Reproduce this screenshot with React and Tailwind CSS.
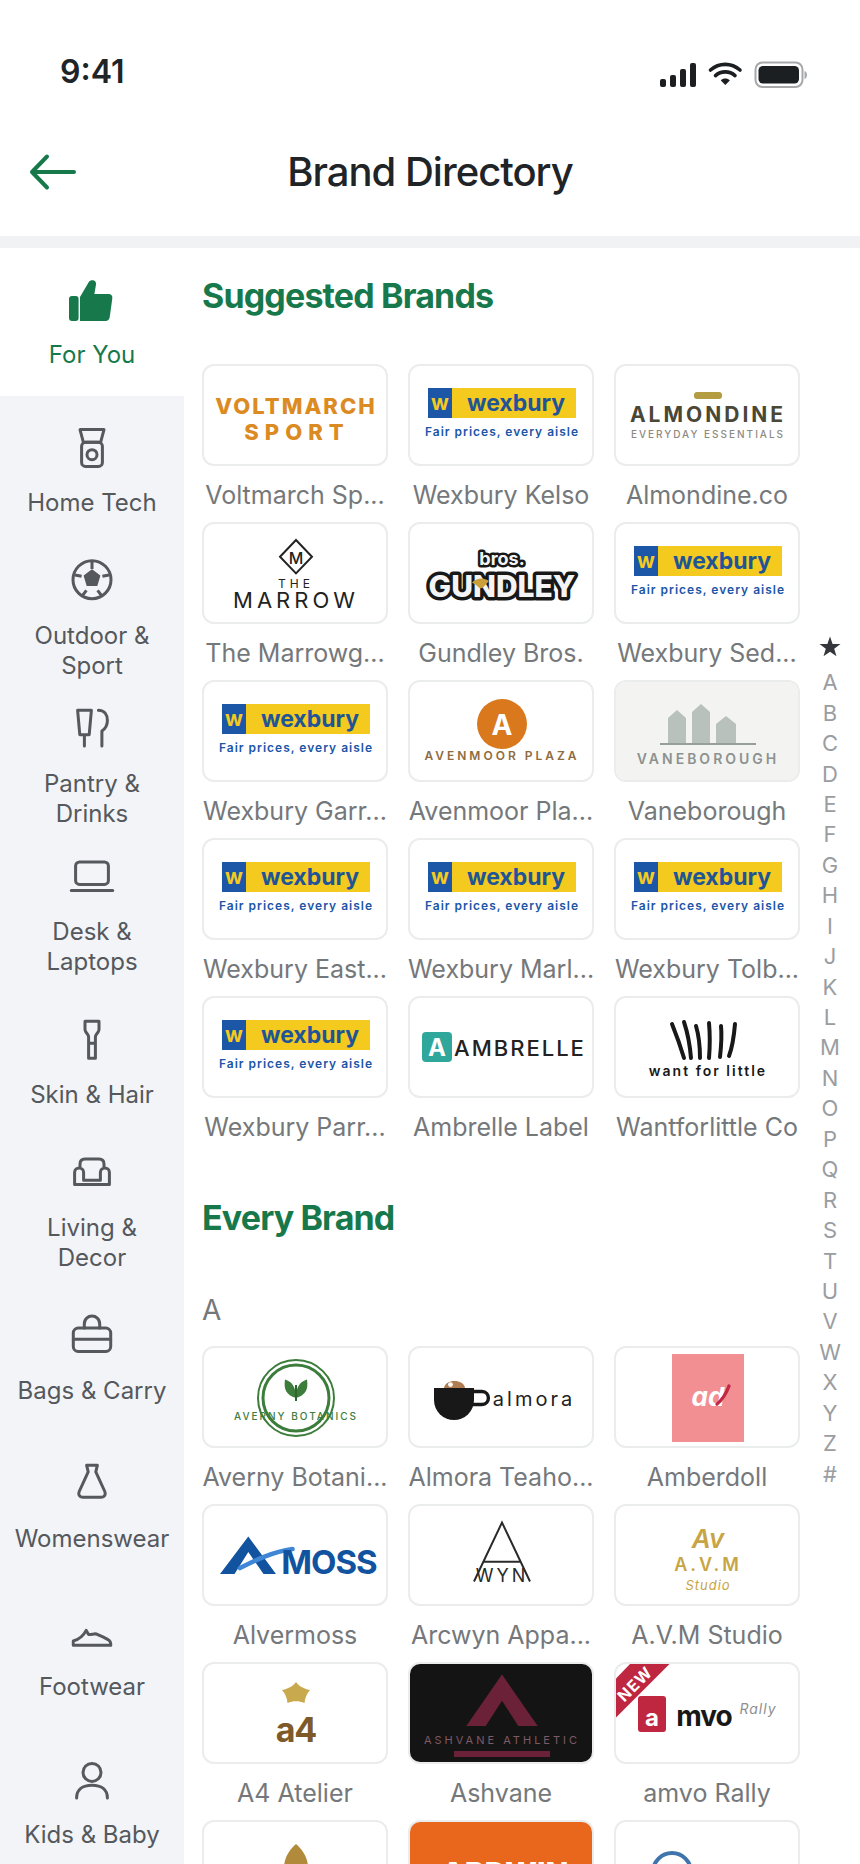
import React, { useState } from "react";

const Icon = ({ children }) => (
  <svg
    viewBox="0 0 52 52"
    className="size-13 shrink-0"
    fill="none"
    stroke="currentColor"
    strokeWidth="3"
    strokeLinecap="round"
    strokeLinejoin="round"
    aria-hidden="true"
  >
    {children}
  </svg>
);

const categories = [
  {
    name: "For You",
    icon: (
      <g fill="currentColor" stroke="none">
        <rect x="3" y="22" width="9.6" height="25" rx="3" />
        <path d="M14 47V23L22.8 8C24.5 5.2 30.6 5.4 30 10.5L28.4 20H42.5C45.2 20 46.7 21.8 46.3 24.4L43.7 43.2C43.3 45.6 41.9 47 39.6 47Z" />
      </g>
    ),
  },
  {
    name: "Home Tech",
    icon: (
      <>
        <path d="M14 7.6H38L34.6 20.3H17.4Z" />
        <rect x="15.6" y="20.3" width="20.8" height="24.1" rx="4" />
        <circle cx="26" cy="32.7" r="5" />
      </>
    ),
  },
  {
    name: "Outdoor & Sport",
    icon: (
      <>
        <circle cx="26" cy="24.7" r="19" />
        <path d="M26 15L33.6 20.9L30.8 30.3H21.2L18.4 20.9Z" fill="currentColor" strokeWidth="1.4" />
        <path d="M26 6.5V14M9 20L15.6 21.2M43 20L36.4 21.2M16.6 40.4L20.4 35.4M35.4 40.4L31.6 35.4" strokeLinecap="butt" />
      </>
    ),
  },
  {
    name: "Pantry & Drinks",
    icon: (
      <path d="M11.6 7.2H25.4L23.2 31.7H13.8ZM18.4 31.7V43M32.4 7.2C38.5 7.2 41.4 12 41.4 17.4C41.4 22.4 39.4 25.6 35.9 28V43" />
    ),
  },
  {
    name: "Desk & Laptops",
    icon: (
      <>
        <rect x="9.6" y="11" width="32.8" height="22.4" rx="4" />
        <path d="M5.3 39.5H46.7" />
      </>
    ),
  },
  {
    name: "Skin & Hair",
    icon: (
      <path d="M19 7.3H33V15.5C33 18.5 29.4 20 29.4 23V44.3H22.6V23C22.6 20 19 18.5 19 15.5ZM22.6 29.3H29.4" />
    ),
  },
  {
    name: "Living & Decor",
    icon: (
      <path d="M8.6 37.5V25.5C8.6 19.4 17.6 19.4 17.6 25.5V33.3H34.4V25.5C34.4 19.4 43.4 19.4 43.4 25.5V37.5ZM14 20.5V17C14 13.5 15.6 12 19 12H33C36.4 12 38 13.5 38 17V20.5" />
    ),
  },
  {
    name: "Bags & Carry",
    icon: (
      <>
        <rect x="7.3" y="18" width="37.4" height="23.4" rx="5" />
        <path d="M18.3 18V14C18.3 3.4 33.7 3.4 33.7 14V18M7.3 29.3H44.7" />
      </>
    ),
  },
  {
    name: "Womenswear",
    icon: (
      <path d="M20.6 7.2H31.4L29.8 13.8L38.8 33.5C40 36.8 38.6 39.2 35.4 39.2H16.6C13.4 39.2 12 36.8 13.2 33.5L22.2 13.8Z" />
    ),
  },
  {
    name: "Footwear",
    icon: (
      <path d="M7.3 39.2V35C13.5 33.4 17.6 29.4 20.2 24.4L22.6 28.6C25.4 28.8 27.6 27.6 30 27.8C35 30.2 39.2 32 42.6 34C44.4 35 44.8 36.8 44.8 39.2Z" />
    ),
  },
  {
    name: "Kids & Baby",
    icon: (
      <>
        <circle cx="26" cy="18.4" r="9" />
        <path d="M10.6 44C10.6 35.5 16.5 31.2 26 31.2C35.5 31.2 41.4 35.5 41.4 44" />
      </>
    ),
  },
];

const Logo = ({ children }) => (
  <svg
    viewBox="0 0 182 98"
    className="block w-full"
    fontFamily="Inter, sans-serif"
    textAnchor="middle"
    aria-hidden="true"
  >
    {children}
  </svg>
);

const VoltmarchLogo = () => (
  <Logo>
    <g fill="#dc8a22" fontSize="22" fontWeight="800">
      <text x="92" y="48" letterSpacing="2">VOLTMARCH</text>
      <text x="93" y="74" letterSpacing="6">SPORT</text>
    </g>
  </Logo>
);

const WexburyLogo = () => (
  <Logo>
    <rect x="18" y="22" width="24" height="30" fill="#1b56a7" />
    <rect x="42" y="22" width="124" height="30" fill="#f4ca1f" />
    <text x="30" y="44" fontSize="21" fontWeight="700" fill="#f4ca1f">w</text>
    <text x="106" y="45" fontSize="23" fontWeight="700" fill="#1f5596">wexbury</text>
    <text x="92" y="70" fontSize="12" fontWeight="600" letterSpacing="1" fill="#1b56a7">
      Fair prices, every aisle
    </text>
  </Logo>
);

const AlmondineLogo = () => (
  <Logo>
    <rect x="78" y="26" width="28" height="7" rx="3" fill="#b49c43" />
    <text x="92" y="56" fontSize="21" fontWeight="700" letterSpacing="3" fill="#4a4736">ALMONDINE</text>
    <text x="92" y="72" fontSize="10" fontWeight="500" letterSpacing="2" fill="#8d897f">EVERYDAY ESSENTIALS</text>
  </Logo>
);

const MarrowLogo = () => (
  <Logo>
    <path d="M92 16L108 32.7L92 49.4L76 32.7Z" fill="none" stroke="#222" strokeWidth="2" />
    <g fill="#222">
      <text x="92" y="40" fontSize="16" fontWeight="500">M</text>
      <text x="92" y="64" fontSize="12" letterSpacing="4">THE</text>
      <text x="92" y="84" fontSize="22" letterSpacing="4">MARROW</text>
    </g>
  </Logo>
);

const GundleyLogo = () => (
  <Logo>
    <g fill="#f4f4f4" stroke="#181818" strokeLinejoin="round" paintOrder="stroke">
      <text x="92" y="41" fontSize="18" fontWeight="700" strokeWidth="5">bros.</text>
      <text x="92" y="73" fontSize="30" fontWeight="800" strokeWidth="7">GUNDLEY</text>
    </g>
    <path d="M62 58.5C67 53.4 74 53.2 79 57L73 63.4C71.4 64.8 69 64.4 67.4 62Z" fill="#c9a03a" />
  </Logo>
);

const AvenmoorLogo = () => (
  <Logo>
    <circle cx="92" cy="42" r="25" fill="#d9781d" />
    <text x="92" y="53" fontSize="28" fontWeight="700" fill="#fff">A</text>
    <text x="92" y="78" fontSize="12" fontWeight="600" letterSpacing="3" fill="#8f6c3e">AVENMOOR PLAZA</text>
  </Logo>
);

const VaneboroughLogo = () => (
  <Logo>
    <rect width="182" height="98" fill="#f3f4f1" />
    <path d="M52 61V36L61 28L70 36V61ZM76 61V30L85 22L94 30V61ZM100 61V42L110 34L120 42V61Z" fill="#b9c1bc" />
    <rect x="44" y="61" width="96" height="2" fill="#969f9a" />
    <text x="92" y="82" fontSize="14" fontWeight="600" letterSpacing="3" fill="#8c9290">VANEBOROUGH</text>
  </Logo>
);

const AmbrelleLogo = () => (
  <Logo>
    <rect x="12" y="34" width="30" height="30" rx="4" fill="#2fa89b" />
    <text x="27" y="58" fontSize="24" fontWeight="700" fill="#fff">A</text>
    <text x="110" y="58" fontSize="22" fontWeight="500" letterSpacing="2" fill="#222">AMBRELLE</text>
  </Logo>
);

const WantLogo = () => (
  <Logo>
    <path
      d="M56 26C60 36 65 50 68 60M68 24C72 36 74 48 75 60M80 28C83 38 84 50 84 60M93 25C94 36 94 48 93 60M105 28C106 38 105 50 104 59M119 26C118 38 116 50 113 58"
      fill="none"
      stroke="#181818"
      strokeWidth="4"
      strokeLinecap="round"
    />
    <text x="92" y="78" fontSize="14" fontWeight="600" letterSpacing="2" fill="#181818">want for little</text>
  </Logo>
);

const AvernyLogo = () => (
  <Logo>
    <g fill="none" stroke="#3c7d3c">
      <circle cx="92" cy="50" r="38" strokeWidth="2" />
      <circle cx="92" cy="50" r="33" strokeWidth="3" />
    </g>
    <path d="M92 50C82 47 79.5 41 81 31.5C88 33.5 92 39 92 50C92 39 96 33.5 103 31.5C104.5 41 102 47 92 50Z" fill="#3c7d3c" />
    <path d="M92 37V53" stroke="#2c662e" strokeWidth="2" />
    <text x="92" y="72" fontSize="10" fontWeight="500" letterSpacing="2" fill="#3c7d3c">AVERNY BOTANICS</text>
  </Logo>
);

const AlmoraLogo = () => (
  <Logo>
    <path d="M34 40C35 30.6 54 30.6 55 40Z" fill="#b07d50" />
    <circle cx="40.5" cy="36.6" r="2.4" fill="#fff" />
    <path d="M24 40H64V52A20 20 0 0 1 24 52Z" fill="#181818" />
    <path d="M63 43.5H72C80.5 43.5 80.5 56.5 72 56.5H62" fill="none" stroke="#181818" strokeWidth="3.4" />
    <text x="124" y="58" fontSize="20" letterSpacing="3" fill="#222">almora</text>
  </Logo>
);

const AmberdollLogo = () => (
  <Logo>
    <rect x="56" y="6" width="72" height="88" fill="#f28f93" />
    <text x="92" y="58" fontSize="26" fontWeight="700" fontStyle="italic" fill="#fff">ad</text>
    <path d="M113 38C110 46 106 52 101 56" fill="none" stroke="#c22947" strokeWidth="3.4" strokeLinecap="round" />
  </Logo>
);

const AlvermossLogo = () => (
  <Logo>
    <path d="M44.3 30.5L72 68H59.5L44.3 46L30.5 68H16Z" fill="#12539f" />
    <path d="M36 62C52 54 68 46 88.5 43" fill="none" stroke="#3f86d6" strokeWidth="4.6" strokeLinecap="round" />
    <text x="125" y="68" fontSize="33" fontWeight="700" letterSpacing="-1" fill="#12539f">MOSS</text>
  </Logo>
);

const ArcwynLogo = () => (
  <Logo>
    <path d="M64 75.5L92 16.5L120 75.5M73.5 55.7H110.5" fill="none" stroke="#2a2a2a" strokeWidth="2" />
    <text x="92" y="76" fontSize="18" letterSpacing="3" fill="#2a2a2a">WYN</text>
  </Logo>
);

const AvmLogo = () => (
  <Logo>
    <g fill="#c8a544">
      <text x="92" y="42" fontSize="26" fontWeight="600" fontStyle="italic">Av</text>
      <text x="92" y="65" fontSize="18" fontWeight="600" letterSpacing="3">A.V.M</text>
      <text x="92" y="84" fontSize="13" fontStyle="italic" letterSpacing="1">Studio</text>
    </g>
  </Logo>
);

const A4Logo = () => (
  <Logo>
    <path d="M92 18C95 22 99 24.5 106 26C102.5 30 101 34 100.5 39C95 36.5 89 36.5 83.5 39C83 34 81.5 30 78 26C85 24.5 89 22 92 18Z" fill="#c9a94e" />
    <text x="92" y="78" fontSize="34" fontWeight="700" letterSpacing="-1" fill="#7e5a2b">a4</text>
  </Logo>
);

const AshvaneLogo = () => (
  <Logo>
    <rect width="182" height="98" fill="#141414" />
    <path d="M92 10.5L127.7 62H108.3L92 36.7L75.7 62H56.3Z" fill="#6b2239" />
    <text x="92" y="80" fontSize="11" letterSpacing="3" fill="#7d5a66">ASHVANE ATHLETIC</text>
    <rect x="44" y="87" width="96" height="6" fill="#6b2239" />
  </Logo>
);

const AmvoLogo = () => (
  <Logo>
    <path d="M0 53.5L53.5 0H14L0 14.5Z" fill="#bf2640" />
    <text x="23" y="24" fontSize="16" fontWeight="700" letterSpacing="1" fill="#fff" transform="rotate(-45 23 24)">
      NEW
    </text>
    <rect x="22" y="32" width="28" height="36" rx="3" fill="#bf2640" />
    <text x="36" y="62" fontSize="24" fontWeight="700" fill="#fff">a</text>
    <text x="88" y="62" fontSize="28" fontWeight="700" letterSpacing="-1" fill="#181818">mvo</text>
    <text x="142" y="50" fontSize="14" fontStyle="italic" letterSpacing="1" fill="#8f8f8f">Rally</text>
  </Logo>
);

const ArborLogo = () => (
  <Logo>
    <path d="M92 22C99 28 104 36 104 46C104 56 99 64 92 70C85 64 80 56 80 46C80 36 85 28 92 22Z" fill="#b18a3c" />
  </Logo>
);

const ArdwinLogo = () => (
  <Logo>
    <rect width="182" height="98" fill="#e9671d" />
    <text x="95" y="62" fontSize="30" fontWeight="800" fill="#fff">ARDWIN</text>
  </Logo>
);

const ArcelaneLogo = () => (
  <Logo>
    <circle cx="56" cy="50" r="19" fill="none" stroke="#3f74ad" strokeWidth="4" />
  </Logo>
);

const suggestedBrands = [
  { name: "Voltmarch Sp...", logo: VoltmarchLogo },
  { name: "Wexbury Kelso", logo: WexburyLogo },
  { name: "Almondine.co", logo: AlmondineLogo },
  { name: "The Marrowg...", logo: MarrowLogo },
  { name: "Gundley Bros.", logo: GundleyLogo },
  { name: "Wexbury Sed...", logo: WexburyLogo },
  { name: "Wexbury Garr...", logo: WexburyLogo },
  { name: "Avenmoor Pla...", logo: AvenmoorLogo },
  { name: "Vaneborough", logo: VaneboroughLogo },
  { name: "Wexbury East...", logo: WexburyLogo },
  { name: "Wexbury Marl...", logo: WexburyLogo },
  { name: "Wexbury Tolb...", logo: WexburyLogo },
  { name: "Wexbury Parr...", logo: WexburyLogo },
  { name: "Ambrelle Label", logo: AmbrelleLogo },
  { name: "Wantforlittle Co", logo: WantLogo },
];

const everyBrand = [
  { name: "Averny Botani...", logo: AvernyLogo },
  { name: "Almora Teaho...", logo: AlmoraLogo },
  { name: "Amberdoll", logo: AmberdollLogo },
  { name: "Alvermoss", logo: AlvermossLogo },
  { name: "Arcwyn Appa...", logo: ArcwynLogo },
  { name: "A.V.M Studio", logo: AvmLogo },
  { name: "A4 Atelier", logo: A4Logo },
  { name: "Ashvane", logo: AshvaneLogo },
  { name: "amvo Rally", logo: AmvoLogo },
  { name: "Arbor", logo: ArborLogo },
  { name: "Ardwin", logo: ArdwinLogo },
  { name: "Arcelane", logo: ArcelaneLogo },
];

const letters = [..."ABCDEFGHIJKLMNOPQRSTUVWXYZ#"];

const StatusBar = () => (
  <div className="flex h-[124px] items-center justify-between pt-5 pr-[52px] pl-[60px]">
    <span className="text-[32px] leading-10 font-semibold">9:41</span>
    <svg viewBox="0 -8 148 36" className="h-9 w-[148px]" fill="#1c1f22" aria-hidden="true">
      <rect x="0" y="17" width="6" height="8" rx="2" />
      <rect x="10" y="13" width="6" height="12" rx="2" />
      <rect x="20" y="7" width="6" height="18" rx="2" />
      <rect x="30" y="1" width="6" height="24" rx="2" />
      <g fill="none" stroke="#1c1f22" strokeWidth="3.6" strokeLinecap="round">
        <path d="M50.5 8C59 0.5 71.5 0.5 80 8" />
        <path d="M55.5 13.6C61 8.6 69.5 8.6 75 13.6" />
      </g>
      <path d="M65.3 23L60.8 18.4C63 16 67.5 16 69.8 18.4Z" />
      <rect x="95.5" y="0.5" width="47" height="24.5" rx="7" fill="none" stroke="#a6a8aa" strokeWidth="2" />
      <rect x="98.5" y="4" width="40.5" height="17.6" rx="4.5" />
      <path d="M144.5 9C147.8 10 147.8 16 144.5 17Z" fill="#a6a8aa" />
    </svg>
  </div>
);

const BrandGrid = ({ brands }) => (
  <ul className="grid grid-cols-3 gap-x-5">
    {brands.map(({ name, logo: BrandLogo }) => (
      <li key={name} className="min-w-0">
        <a href="#brand" className="block">
          <div className="overflow-hidden rounded-xl border-2 border-[#ebecec] bg-white">
            <BrandLogo />
          </div>
          <p className="h-14 pt-3 text-center text-[25px] leading-[34px] whitespace-nowrap text-[#75787b]">{name}</p>
        </a>
      </li>
    ))}
  </ul>
);

const BrandDirectory = () => {
  const [active, setActive] = useState("For You");

  return (
    <div className="flex h-screen flex-col bg-white font-[Inter,sans-serif] text-[#212427]">
      <header className="shrink-0 border-b-12 border-[#f1f2f4]">
        <StatusBar />
        <div className="grid h-28 grid-cols-[1fr_auto_1fr] items-center px-7 pb-4">
          <button type="button" aria-label="Back" className="justify-self-start text-[#17794b]">
            <svg viewBox="0 0 50 38" className="h-[38px] w-[50px]" fill="none" stroke="currentColor" strokeWidth="4" strokeLinecap="round" strokeLinejoin="round">
              <path d="M46 19H4M19 3.5L4 19L19 34.5" />
            </svg>
          </button>
          <h1 className="text-[40px] leading-12 font-medium tracking-tight">Brand Directory</h1>
        </div>
      </header>

      <div className="flex min-h-0 flex-1">
        <nav aria-label="Categories" className="flex w-46 shrink-0 flex-col overflow-y-auto bg-[#f2f4f7] [scrollbar-width:none]">
          {categories.map(({ name, icon }) => (
            <button
              key={name}
              type="button"
              onClick={() => setActive(name)}
              className={`flex h-37 shrink-0 flex-col items-center justify-center gap-3.5 px-3 text-[24px] leading-[30px] ${
                active === name ? "bg-white text-[#17794b]" : "text-[#55585c]"
              }`}
            >
              <Icon>{icon}</Icon>
              {name}
            </button>
          ))}
        </nav>

        <main className="min-w-0 flex-1 overflow-y-auto pt-7 pl-[18px] [scrollbar-width:none]">
          <h2 className="mb-12 text-[34px] leading-10 font-bold tracking-tight text-[#17794b]">Suggested Brands</h2>
          <BrandGrid brands={suggestedBrands} />
          <h2 className="mt-11 mb-14 text-[34px] leading-10 font-bold tracking-tight text-[#17794b]">Every Brand</h2>
          <h3 className="mb-5 text-[28px] leading-8 text-[#75787b]">A</h3>
          <BrandGrid brands={everyBrand} />
        </main>

        <nav aria-label="Jump to letter" className="flex w-15 shrink-0 flex-col items-center justify-center pt-3 text-[22px] leading-6 text-[#9a9da1]">
          <a href="#star" aria-label="Favourites" className="mb-2">
            <svg viewBox="0 0 24 24" className="size-6" fill="#33363b">
              <path d="M12 1.5L14.6 9H22.5L16.2 13.7L18.5 21.3L12 16.8L5.5 21.3L7.8 13.7L1.5 9H9.4Z" />
            </svg>
          </a>
          <ul className="flex h-[822px] flex-col">
            {letters.map((letter) => (
              <li key={letter} className="flex flex-1 items-center justify-center">
                <a href={`#letter-${letter}`}>{letter}</a>
              </li>
            ))}
          </ul>
        </nav>
      </div>
    </div>
  );
};

export default BrandDirectory;
